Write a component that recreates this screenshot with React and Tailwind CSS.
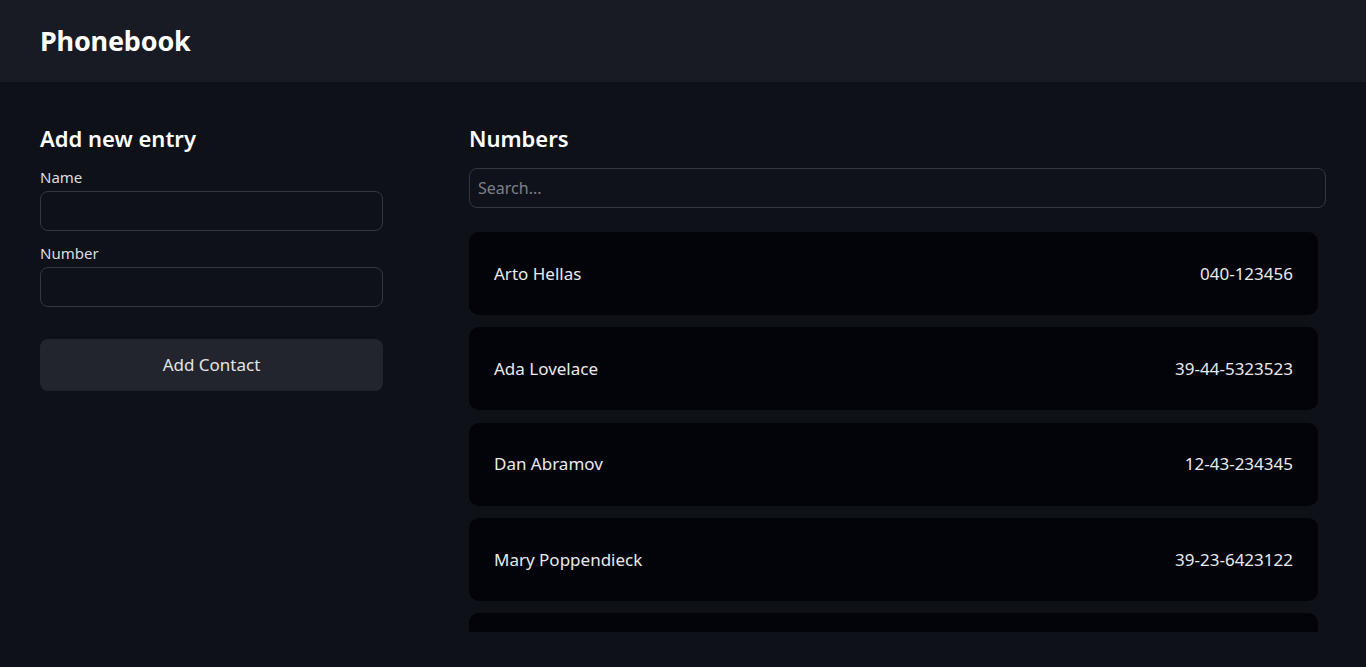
import React from "react";

const contacts = [
  { name: "Arto Hellas", number: "040-123456" },
  { name: "Ada Lovelace", number: "39-44-5323523" },
  { name: "Dan Abramov", number: "12-43-234345" },
  { name: "Mary Poppendieck", number: "39-23-6423122" },
  { name: "Grace Hopper", number: "11-22-3344556" },
];

export default function App() {
  return (
    <div
      className="min-h-screen bg-[#0e1118] text-[#e8e9ec]"
      style={{ fontFamily: '"Noto Sans", "Open Sans", sans-serif' }}
    >
      <header className="h-[82px] bg-[#181b23] flex items-center px-10 pt-[1px]">
        <h1 className="text-[27px] font-bold text-white tracking-[-0.2px]">Phonebook</h1>
      </header>
      <main className="flex gap-[86px] px-10 pt-[41px]">
        <section className="w-[343px] shrink-0">
          <h2 className="text-[22px] font-semibold text-white leading-[30px]">Add new entry</h2>
          <div className="mt-[14px] flex flex-col">
            <label className="text-[15px] leading-[20px] text-[#dcdde0]">Name</label>
            <input className="mt-[4px] h-[40px] rounded-lg border border-[#34373f] bg-transparent px-2 outline-none" />
            <label className="mt-[12px] text-[15px] leading-[20px] text-[#dcdde0]">Number</label>
            <input className="mt-[4px] h-[40px] rounded-lg border border-[#34373f] bg-transparent px-2 outline-none" />
            <button className="mt-[32px] h-[52px] rounded-lg bg-[#22252d] text-[17px] text-[#e3e4e7]">
              Add Contact
            </button>
          </div>
        </section>
        <section className="flex-1 min-w-0">
          <h2 className="text-[22px] font-semibold text-white leading-[30px]">Numbers</h2>
          <input
            placeholder="Search..."
            className="mt-[15px] w-full h-[40px] rounded-lg border border-[#34373f] bg-[#0f121a] px-2 text-[16px] placeholder:text-[#7d8088] outline-none"
          />
          <div className="mt-[24px] h-[400px] overflow-hidden pr-2">
            <div className="flex flex-col gap-[12.3px]">
              {contacts.map((c) => (
                <div
                  key={c.name}
                  className="h-[83px] shrink-0 rounded-[10px] bg-[#020409] px-[25px] flex items-center justify-between text-[17px] text-[#e9eaed]"
                >
                  <span>{c.name}</span>
                  <span>{c.number}</span>
                </div>
              ))}
            </div>
          </div>
        </section>
      </main>
    </div>
  );
}
